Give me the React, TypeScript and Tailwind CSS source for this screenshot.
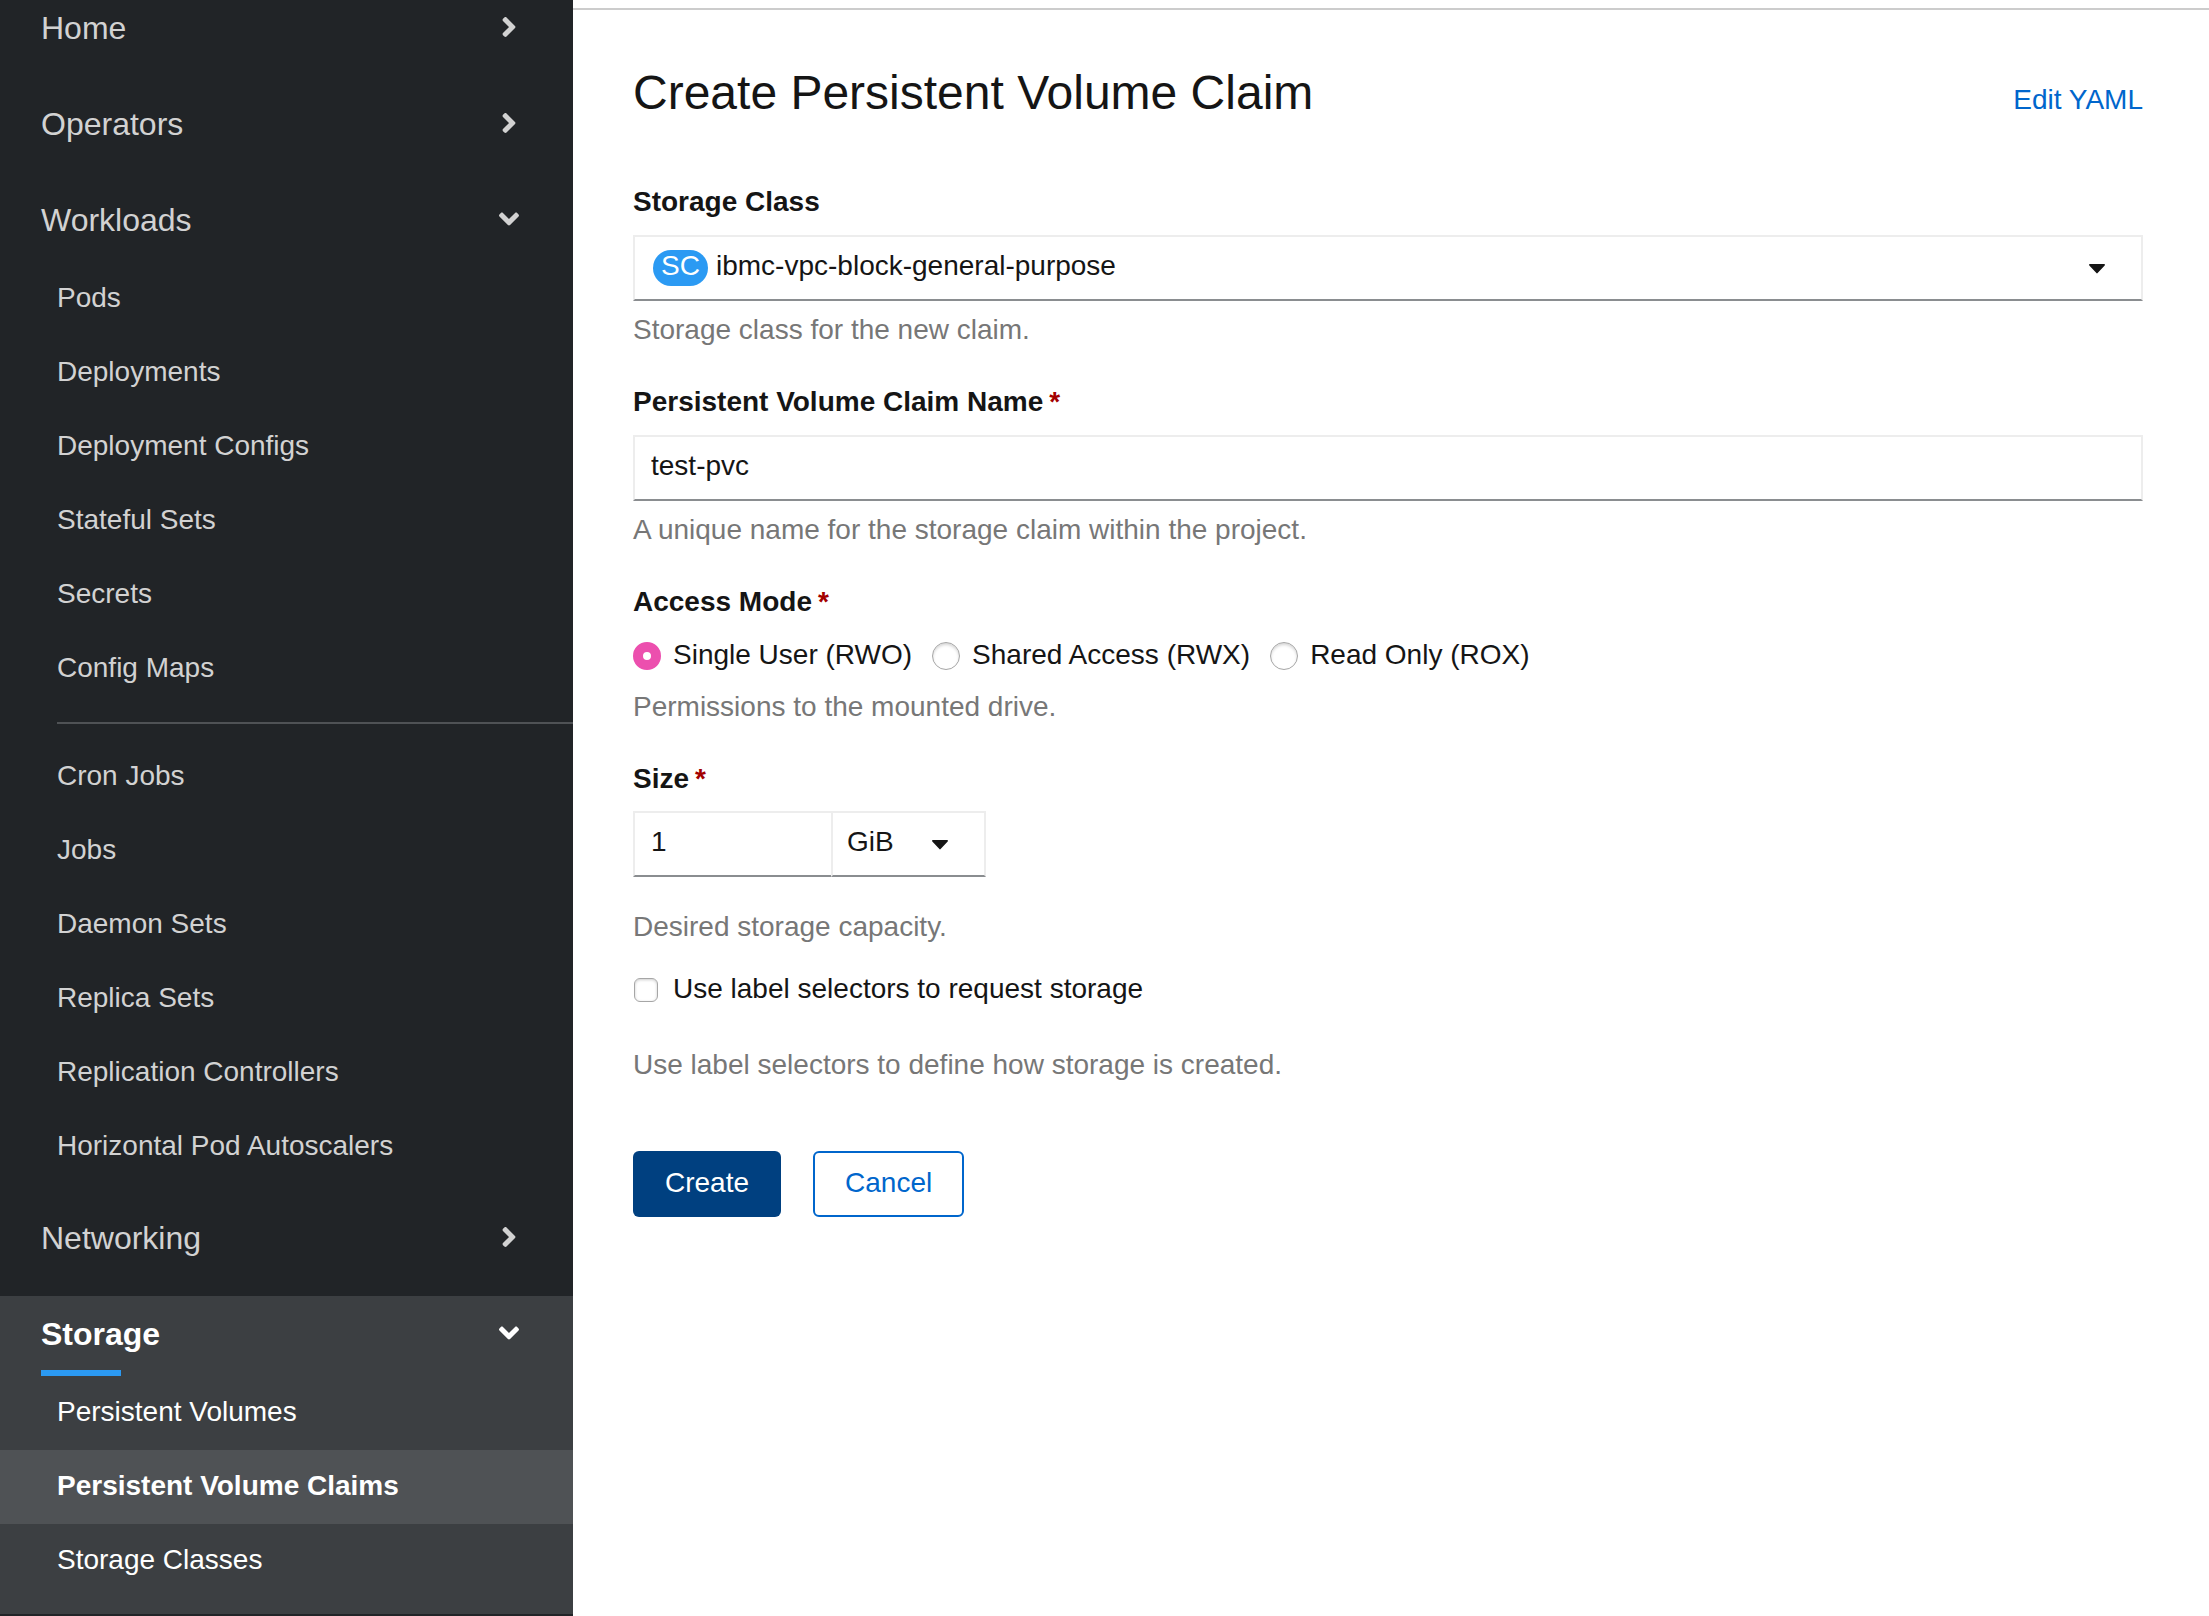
import { useState } from "react";
import type { ReactNode } from "react";
import { FaAngleDown, FaAngleRight } from "react-icons/fa";

const workloads = ["Pods", "Deployments", "Deployment Configs", "Stateful Sets", "Secrets", "Config Maps"];
const controllers = [
  "Cron Jobs",
  "Jobs",
  "Daemon Sets",
  "Replica Sets",
  "Replication Controllers",
  "Horizontal Pod Autoscalers",
];
const storage = ["Persistent Volumes", "Persistent Volume Claims", "Storage Classes"];
const modes = ["Single User (RWO)", "Shared Access (RWX)", "Read Only (ROX)"];

function NavGroup({
  title,
  open = false,
  active = false,
  children,
}: {
  title: string;
  open?: boolean;
  active?: boolean;
  children?: ReactNode;
}) {
  const Icon = open ? FaAngleDown : FaAngleRight;
  return (
    <li className={active ? "bg-[#3c3f42] pb-4 text-white" : "mb-4 text-[#d2d2d2]"}>
      <button
        type="button"
        aria-expanded={open}
        className="relative flex h-20 w-full items-center justify-between pr-12 pb-1.5 pl-[41px] text-left text-[32px] leading-[48px]"
      >
        <span className={active ? "pt-0.5 font-bold" : "pt-0.5"}>{title}</span>
        <Icon size={32} aria-hidden="true" />
        {active && <span className="absolute bottom-0 left-[41px] h-1.5 w-20 bg-[#2b9af3]" />}
      </button>
      {children}
    </li>
  );
}

function NavLinks({ items, current }: { items: string[]; current?: string }) {
  return (
    <ul>
      {items.map((item) => (
        <li key={item}>
          <a
            href="#"
            aria-current={item === current ? "page" : undefined}
            className={
              item === current
                ? "block bg-[#4f5255] pt-[15px] pb-[17px] pl-[57px] leading-[42px] font-bold"
                : "block pt-[15px] pb-[17px] pl-[57px] leading-[42px]"
            }
          >
            {item}
          </a>
        </li>
      ))}
    </ul>
  );
}

function Required() {
  return (
    <span aria-hidden="true" className="ml-1.5 text-[#a30000]">
      *
    </span>
  );
}

function Caret() {
  return (
    <svg
      viewBox="0 0 16 10"
      aria-hidden="true"
      className="pointer-events-none absolute top-[29px] right-[38px] h-2.5 w-4 fill-current"
    >
      <path d="M.9 0h14.2c.8 0 1.2.9.6 1.5L8.6 9.1c-.3.4-.9.4-1.2 0L.3 1.5C-.3.9.1 0 .9 0z" />
    </svg>
  );
}

function Help({ children, className = "" }: { children: ReactNode; className?: string }) {
  return <p className={`text-[#777777] ${className}`}>{children}</p>;
}

export default function App() {
  const [name, setName] = useState("test-pvc");
  const [mode, setMode] = useState(modes[0]);
  const [size, setSize] = useState("1");
  const [selectors, setSelectors] = useState(false);

  return (
    <div className="flex h-screen overflow-hidden bg-white font-['Liberation_Sans',Arial,sans-serif] text-[28px] leading-[42px] text-[#151515]">
      <nav aria-label="Main" className="w-[573px] shrink-0 overflow-hidden bg-[#212427]">
        <ul className="-mt-2.5">
          <NavGroup title="Home" />
          <NavGroup title="Operators" />
          <NavGroup title="Workloads" open>
            <NavLinks items={workloads} />
            <hr className="my-4 ml-[57px] border-t-2 border-[#4f5255]" />
            <NavLinks items={controllers} />
          </NavGroup>
          <NavGroup title="Networking" />
          <NavGroup title="Storage" open active>
            <NavLinks items={storage} current="Persistent Volume Claims" />
          </NavGroup>
        </ul>
      </nav>

      <main className="min-w-0 flex-1 pt-2">
        <div className="border-t-2 border-[#cccccc] pt-[54px] pr-[66px] pl-[60px]">
          <header className="flex items-baseline justify-between">
            <h1 className="text-[48px] leading-[58px]">Create Persistent Volume Claim</h1>
            <a href="#" className="text-[#0066cc]">
              Edit YAML
            </a>
          </header>

          <form className="mt-[59px]" onSubmit={(e) => e.preventDefault()}>
            <label htmlFor="storage-class" className="block font-bold">
              Storage Class
            </label>
            <div className="relative mt-3">
              <select
                id="storage-class"
                className="block h-[66px] w-full appearance-none border-2 border-[#ededed] border-b-[#8a8d90] bg-white pb-1 pl-[81px]"
              >
                <option>ibmc-vpc-block-general-purpose</option>
              </select>
              <span className="pointer-events-none absolute top-[15px] left-5 h-9 rounded-full bg-[#2b9af3] px-2 leading-[32px] text-white">
                SC
              </span>
              <Caret />
            </div>
            <Help className="mt-2">Storage class for the new claim.</Help>

            <label htmlFor="claim-name" className="mt-[30px] block font-bold">
              Persistent Volume Claim Name
              <Required />
            </label>
            <input
              id="claim-name"
              type="text"
              value={name}
              onChange={(e) => setName(e.target.value)}
              className="mt-3 block h-[66px] w-full border-2 border-[#ededed] border-b-[#8a8d90] px-4 pb-1"
            />
            <Help className="mt-2">A unique name for the storage claim within the project.</Help>

            <fieldset className="mt-[30px]">
              <legend className="font-bold">
                Access Mode
                <Required />
              </legend>
              <div className="mt-[11px] flex gap-5">
                {modes.map((m) => (
                  <label key={m} className="flex items-center">
                    <input
                      type="radio"
                      name="access-mode"
                      checked={mode === m}
                      onChange={() => setMode(m)}
                      className="mt-0.5 mr-3 size-7 appearance-none rounded-full border border-[#a6a6a6] bg-white shadow-[inset_0_2px_3px_rgba(0,0,0,0.16)] checked:border-[10px] checked:border-[#ec4fae] checked:shadow-none"
                    />
                    {m}
                  </label>
                ))}
              </div>
            </fieldset>
            <Help className="mt-2.5">Permissions to the mounted drive.</Help>

            <label htmlFor="size" className="mt-[30px] block font-bold">
              Size
              <Required />
            </label>
            <div className="mt-[11px] flex">
              <input
                id="size"
                type="text"
                inputMode="numeric"
                value={size}
                onChange={(e) => setSize(e.target.value)}
                className="h-[66px] w-[198px] border-2 border-r-0 border-[#ededed] border-b-[#8a8d90] px-4 pb-1"
              />
              <div className="relative">
                <select
                  aria-label="Size unit"
                  className="block h-[66px] w-[155px] appearance-none border-2 border-[#ededed] border-b-[#8a8d90] bg-white pb-1 pl-3.5"
                >
                  <option>GiB</option>
                </select>
                <Caret />
              </div>
            </div>
            <Help className="mt-[29px]">Desired storage capacity.</Help>

            <label className="mt-5 flex items-center">
              <input
                type="checkbox"
                checked={selectors}
                onChange={(e) => setSelectors(e.target.checked)}
                className="mt-0.5 mr-[15px] ml-px size-6 appearance-none rounded-md border border-[#a6a6a6] bg-white shadow-[inset_0_1px_3px_rgba(0,0,0,0.2)] checked:bg-[#ec4fae]"
              />
              Use label selectors to request storage
            </label>
            <Help className="mt-[34px]">Use label selectors to define how storage is created.</Help>

            <div className="mt-[65px] flex gap-8">
              <button type="submit" className="h-[66px] rounded-md bg-[#004080] px-8 pb-0.5 text-white">
                Create
              </button>
              <button type="button" className="h-[66px] rounded-md border-2 border-[#0066cc] px-[30px] pb-0.5 text-[#0066cc]">
                Cancel
              </button>
            </div>
          </form>
        </div>
      </main>
    </div>
  );
}
